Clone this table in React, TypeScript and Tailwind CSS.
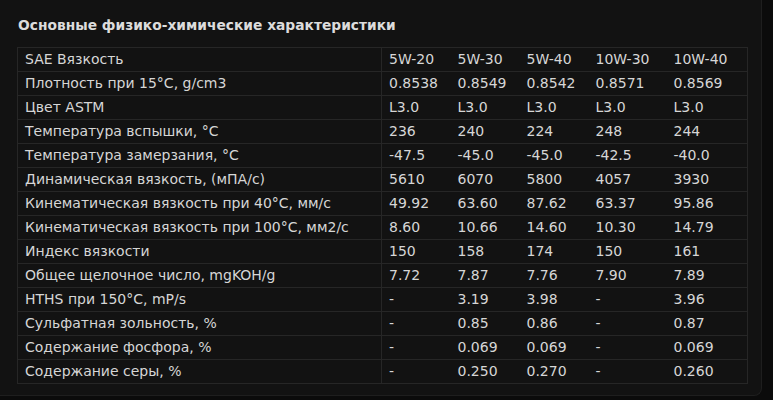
import React from "react";

const rows: string[][] = [
  ["SAE Вязкость", "5W-20", "5W-30", "5W-40", "10W-30", "10W-40"],
  ["Плотность при 15°C, g/cm3", "0.8538", "0.8549", "0.8542", "0.8571", "0.8569"],
  ["Цвет ASTM", "L3.0", "L3.0", "L3.0", "L3.0", "L3.0"],
  ["Температура вспышки, °C", "236", "240", "224", "248", "244"],
  ["Температура замерзания, °C", "-47.5", "-45.0", "-45.0", "-42.5", "-40.0"],
  ["Динамическая вязкость, (мПА/с)", "5610", "6070", "5800", "4057", "3930"],
  ["Кинематическая вязкость при 40°C, мм/с", "49.92", "63.60", "87.62", "63.37", "95.86"],
  ["Кинематическая вязкость при 100°C, мм2/с", "8.60", "10.66", "14.60", "10.30", "14.79"],
  ["Индекс вязкости", "150", "158", "174", "150", "161"],
  ["Общее щелочное число, mgKOH/g", "7.72", "7.87", "7.76", "7.90", "7.89"],
  ["HTHS при 150°C, mP/s", "-", "3.19", "3.98", "-", "3.96"],
  ["Сульфатная зольность, %", "-", "0.85", "0.86", "-", "0.87"],
  ["Содержание фосфора, %", "-", "0.069", "0.069", "-", "0.069"],
  ["Содержание серы, %", "-", "0.250", "0.270", "-", "0.260"],
];

const widths = ["w-[364px]", "w-[69px]", "w-[69px]", "w-[69px]", "w-[78px]", "w-[81px]"];

export default function App() {
  return (
    <div className="w-[773px] h-[400px] bg-[#0b0b0b] overflow-hidden" style={{ fontFamily: '"DejaVu Sans", Verdana, sans-serif' }}>
      <div className="w-[762px] h-[396px] bg-[#121212] rounded-br-[8px] border-r border-b border-[#1e1e1e] pl-[17px] pt-[15px]">
        <h2 className="text-[13.8px] font-bold text-[#dcdcdc] leading-[20px] pl-[1px]">Основные физико-химические характеристики</h2>
        <table className="mt-[12px] border-collapse border border-[#262626] text-[14px] text-[#d6d6d6] table-fixed w-[730px]">
          <tbody>
            {rows.map((r, i) => (
              <tr key={i} className="h-[24px] border-b border-[#262626]">
                {r.map((c, j) => (
                  <td
                    key={j}
                    className={`${widths[j]} pl-[7px] p-0 leading-[23px] whitespace-nowrap ${j === 0 ? "border-r border-[#262626]" : ""}`}
                  >
                    {c}
                  </td>
                ))}
              </tr>
            ))}
          </tbody>
        </table>
      </div>
    </div>
  );
}
